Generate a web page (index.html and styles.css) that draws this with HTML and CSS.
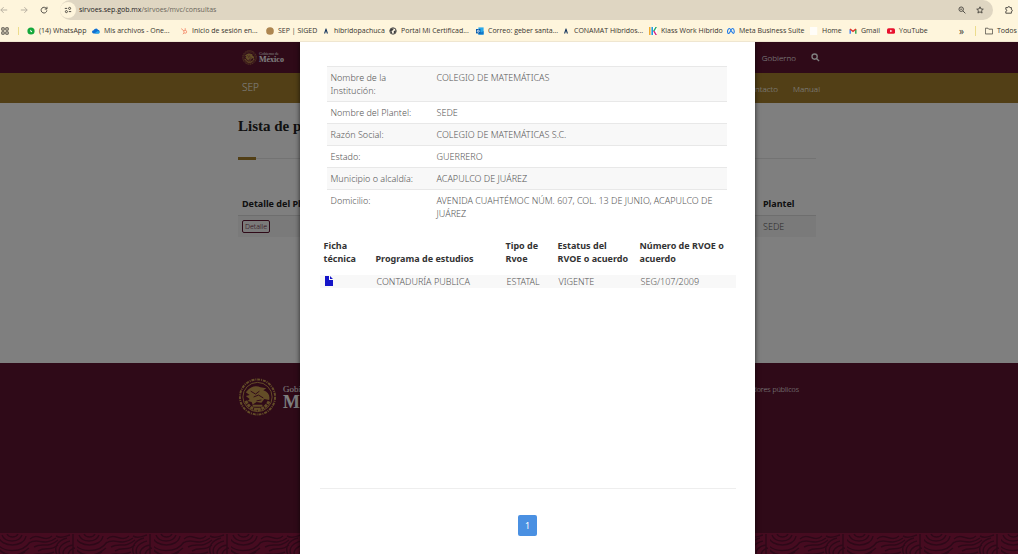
FILE: index.html
```html
<!DOCTYPE html>
<html lang="es">

<head>
    <meta charset="UTF-8">
    <meta name="viewport" content="width=device-width, initial-scale=1.0">
    <title>Consultas SIRVOES</title>
    <link rel="stylesheet" href="styles.css">
</head>

<body>
    <!-- Browser bar -->
    <header class="browser">
        <div class="toolbar">
            <button class="tool" aria-label="Atrás"><svg viewBox="0 0 10 10" class="faded"><path d="M9 5H1M4.500 1.500L1 5l3.500 3.500" /></svg></button>
            <button class="tool" aria-label="Adelante"><svg viewBox="0 0 10 10" class="faded"><path d="M1 5h8M5.500 1.500L9 5 5.500 8.500" /></svg></button>
            <button class="tool" aria-label="Recargar"><svg viewBox="0 0 10 10"><path d="M8.200 3.500A3.600 3.600 0 1 0 8.600 5.500M8.700 1v2.800H5.900" /></svg></button>
            <div class="address">
                <button class="site-info" aria-label="Información del sitio"><svg viewBox="0 0 10 10"><path d="M1 3h3M9 7H6" /><circle cx="7" cy="3" r="1.300" /><circle cx="3" cy="7" r="1.300" /></svg></button>
                <span class="url"><b>sirvoes.sep.gob.mx</b>/sirvoes/mvc/consultas</span>
                <button class="tool" aria-label="Zoom"><svg viewBox="0 0 10 10"><circle cx="4" cy="4" r="2.800" /><path d="M6 6l3.200 3.200M2.800 4h2.400" /></svg></button>
                <button class="tool" aria-label="Favorito"><svg viewBox="0 0 10 10"><path d="M5 1l1.200 2.700 2.900.3-2.200 1.900.7 2.900L5 7.300 2.400 8.800l.7-2.900L.9 4l2.900-.3z" /></svg></button>
            </div>
            <button class="tool" aria-label="Extensiones"><svg viewBox="0 0 10 10"><path d="M1 2h2.500a1.300 1.300 0 0 1 2.600 0H8v2.500a1.200 1.200 0 0 1 0 2.400V9H1V6.700a1.200 1.200 0 0 0 0-2.400z" /></svg></button>
        </div>
        <nav class="bookmarks">
            <button class="apps" aria-label="Aplicaciones"><svg viewBox="0 0 10 10"><path d="M1 1h3v3H1zM6 1h3v3H6zM1 6h3v3H1zM6 6h3v3H6z" /></svg></button>
            <a href="#"><svg viewBox="0 0 10 10"><circle cx="5" cy="5" r="4.500" fill="#14a83c" /><path d="M4 3.200c-.6 2 .8 3.500 2.300 3.500V5.400L4.600 4z" fill="#fff" /></svg>(14) WhatsApp</a>
            <a href="#"><svg viewBox="0 0 10 10"><path d="M2 8a2 2 0 0 1 0-4 3 3 0 0 1 5.400-.5A2.300 2.300 0 0 1 8 8z" fill="#0f6fd1" /><path d="M3 8l4-3a2 2 0 0 1 2 3z" fill="#28a8ea" /></svg>Mis archivos - One...</a>
            <a href="#"><svg viewBox="0 0 10 10"><g fill="none" stroke="#f3805f"><circle cx="6.500" cy="6" r="1.800" /><path d="M5 5L1.500 2M6.500 4V1.500M5 7.500L3.500 9" /></g></svg>Inicio de sesión en...</a>
            <a href="#"><svg viewBox="0 0 10 10"><circle cx="5" cy="5" r="4.800" fill="#ad8650" /></svg>SEP | SIGED</a>
            <a href="#"><svg viewBox="0 0 10 10"><path d="M2.500 8L4.500 2h1l2 6H6l-1-3-1 3z" fill="#17375f" /></svg>hibridopachuca</a>
            <a href="#"><svg viewBox="0 0 10 10"><circle cx="5" cy="5" r="4" fill="#fff8e6" stroke="#3d3d3d" stroke-width="1.200" /><path d="M1 4l2-2 3 0-1 2-2 1 1 2-1 1zM6 5l3-1-1 3-2 1.500z" fill="#3d3d3d" /></svg>Portal Mi Certificad...</a>
            <a href="#"><svg viewBox="0 0 10 10"><path d="M3 .5h6.500v9H3z" fill="#28a8ea" /><path d="M3 5l3.300 2L9.500 5v4.500H3z" fill="#1378c9" /><path d="M0 2.500h5.500V8H0z" fill="#075aa9" /><circle cx="2.800" cy="5.200" r="1.300" fill="none" stroke="#fff" /></svg>Correo: geber santa...</a>
            <a href="#"><svg viewBox="0 0 10 10"><path d="M2.500 8L4.500 2h1l2 6H6l-1-3-1 3z" fill="#17375f" /></svg>CONAMAT Híbridos...</a>
            <a href="#"><svg viewBox="0 0 10 10"><path d="M0 0h10v10H0z" fill="#fff" /><path d="M0 0h2v10H0z" fill="#f1ab30" /><path d="M3 0h2v10H3z" fill="#219bdc" /><path d="M5 5l3-5h2L7 5z" fill="#2daa63" /><path d="M5 5h2l3 5H8z" fill="#d9277c" /></svg>Klass Work Híbrido</a>
            <a href="#"><svg viewBox="0 0 10 10"><path d="M1 7.500C0 5 1.500 2 3 2c2 0 3 6 5 6 1.500 0 1.500-6-1-6S4 8 2 8C1.500 8 1 8 1 7.500z" fill="none" stroke="#1877e8" stroke-width="1.300" /></svg>Meta Business Suite</a>
            <a href="#"><svg viewBox="0 0 10 10"><path d="M0 0h9v10H0z" fill="#fffdf8" /></svg>Home</a>
            <a href="#"><svg viewBox="0 0 10 10"><path d="M1.500 8.500V3" stroke="#4285f4" stroke-width="1.800" /><path d="M8.500 8.500V3" stroke="#34a853" stroke-width="1.800" /><path d="M1.200 2.500L5 5.500l3.800-3" fill="none" stroke="#e0352b" stroke-width="1.800" /></svg>Gmail</a>
            <a href="#"><svg viewBox="0 0 10 10"><rect y="1.500" width="10" height="7" rx="2" fill="#e8112d" /><path d="M4 3.500L6.800 5 4 6.500z" fill="#fff" /></svg>YouTube</a>
            <button class="more" aria-label="Más marcadores">»</button>
            <a href="#" class="all"><svg viewBox="0 0 10 10"><path d="M.5 1.500h3.200l1 1.200h4.800v6h-9z" fill="none" stroke="#4d4a43" /></svg>Todos</a>
        </nav>
    </header>

    <svg class="defs" aria-hidden="true">
        <symbol id="seal" viewBox="0 0 40 40">
            <g fill="none" stroke="currentColor">
                <circle cx="20" cy="20" r="18" stroke-width="2" stroke-dasharray="3 1 1 1" />
                <circle cx="20" cy="20" r="15" />
                <path d="M8 24c3 7 9 9 12 9s9-2 12-9" stroke-width="3" stroke-dasharray="3 1" />
                <path d="M15 29h10M17 32h6" stroke-width="2" />
            </g>
            <path d="M9 14c4-5 10-6 14-4l6 1-3 2c5 2 7 5 6 10l-5-1-3 4-5-1-4 3-1-3-4-1 2-2-4-3 4-1-4-3z" fill="currentColor" />
            <path d="M13 14l5 3 4-3M16 20l5-2 5 3M19 24l5-1" fill="none" stroke="#611232" />
        </symbol>
    </svg>

    <main class="viewport">
        <div class="page">
            <div class="top-bar">
                <div class="container bar-row">
                    <a href="#" class="brand">
                        <svg><use href="#seal" /></svg>
                        <span class="brand-name"><small>Gobierno de</small>México</span>
                    </a>
                    <nav class="links">
                        <a href="#">Gobierno</a>
                        <button class="search" aria-label="Buscar"><svg viewBox="0 0 10 10"><circle cx="4" cy="4" r="2.900" /><path d="M6 6l3 3" /></svg></button>
                    </nav>
                </div>
            </div>
            <div class="sub-bar">
                <div class="container bar-row">
                    <a href="#" class="sep">SEP</a>
                    <nav class="links">
                        <a href="#">Contacto</a>
                        <a href="#">Manual</a>
                    </nav>
                </div>
            </div>
            <section class="container results">
                <h1>Lista de planteles</h1>
                <table class="plantels">
                    <thead>
                        <tr>
                            <th>Detalle del Plantel</th>
                            <th>Plantel</th>
                        </tr>
                    </thead>
                    <tbody>
                        <tr>
                            <td><button class="detail">Detalle</button></td>
                            <td>SEDE</td>
                        </tr>
                    </tbody>
                </table>
            </section>
            <footer>
                <div class="container footer-row">
                    <div class="brand brand-large">
                        <svg><use href="#seal" /></svg>
                        <span class="brand-name"><small>Gobierno de</small>México</span>
                    </div>
                    <a href="#">Denuncia contra servidores públicos</a>
                </div>
                <svg class="greca" aria-hidden="true">
                    <defs>
                        <pattern id="waves" width="77" height="28" patternUnits="userSpaceOnUse">
                            <g fill="none" stroke="#5c1030" stroke-width="1.500">
                                <path d="M-2 3c3 12 26 12 28 0M2 2c3 8 17 8 20 0M7 1c2 4 9 4 11 0M-4 8c4 12 26 13 34 1M-3 14c8 11 22 10 32 1M3 21c8 4 16 2 22-2" />
                                <path d="M30 6c8-7 14 4 22-3M29 10c9-6 15 4 27-5M34 14c8-5 14 2 24-7M38 18c8-5 12 1 20-6M28 24c8-6 16 0 26-5" />
                                <path d="M57 22c-4-9 2-15 10-17M60 22c-3-7 2-12 10-14M64 23c-3-5 2-10 9-11M68 23c0-5 3-7 7-8M56 3c5 3 10 0 14-1M73 1v22" />
                            </g>
                        </pattern>
                    </defs>
                    <rect width="100%" height="28" fill="#8c1741" />
                    <rect width="100%" height="28" fill="url(#waves)" />
                </svg>
            </footer>
        </div>

        <div class="backdrop">
            <div class="modal" role="dialog" aria-modal="true" aria-label="Detalle del plantel">
                <table class="info">
                    <tbody>
                        <tr><th scope="row">Nombre de la Institución:</th><td>COLEGIO DE MATEMÁTICAS</td></tr>
                        <tr><th scope="row">Nombre del Plantel:</th><td>SEDE</td></tr>
                        <tr><th scope="row">Razón Social:</th><td>COLEGIO DE MATEMÁTICAS S.C.</td></tr>
                        <tr><th scope="row">Estado:</th><td>GUERRERO</td></tr>
                        <tr><th scope="row">Municipio o alcaldía:</th><td>ACAPULCO DE JUÁREZ</td></tr>
                        <tr><th scope="row">Domicilio:</th><td>AVENIDA CUAHTÉMOC NÚM. 607, COL. 13 DE JUNIO, ACAPULCO DE JUÁREZ</td></tr>
                    </tbody>
                </table>

                <table class="programs">
                    <colgroup>
                        <col class="col-file">
                        <col class="col-program">
                        <col class="col-type">
                        <col class="col-status">
                        <col>
                    </colgroup>
                    <thead>
                        <tr>
                            <th>Ficha técnica</th>
                            <th>Programa de estudios</th>
                            <th>Tipo de Rvoe</th>
                            <th>Estatus del RVOE o acuerdo</th>
                            <th>Número de RVOE o acuerdo</th>
                        </tr>
                    </thead>
                    <tbody>
                        <tr>
                            <td><a href="#" aria-label="Ficha técnica"><svg viewBox="0 0 8 10"><path d="M0 0h4v4h4v6H0zM5 0l3 3H5z" /></svg></a></td>
                            <td>CONTADURÍA PUBLICA</td>
                            <td>ESTATAL</td>
                            <td>VIGENTE</td>
                            <td>SEG/107/2009</td>
                        </tr>
                    </tbody>
                </table>

                <div class="pager">
                    <button>1</button>
                </div>
            </div>
        </div>
    </main>
</body>

</html>
```
FILE: styles.css
```css
:root {
    --wine: #5e1431;
    --gold: #a57f2c;
    --chrome: #fef5dc;
    --address: #dfd6c2;
    --text: #555;
    --line: #e8e8e8;
    --stripe: #f8f8f8;
}

* {
    margin: 0;
    padding: 0;
    box-sizing: border-box;
}

body {
    height: 100vh;
    display: flex;
    flex-direction: column;
    overflow: hidden;
    font-family: 'Noto Sans', sans-serif;
    font-size: 9px;
    line-height: 13px;
    color: var(--text);
}

a {
    color: inherit;
    text-decoration: none;
}

button {
    font: inherit;
    color: inherit;
    background: none;
    border: none;
    cursor: pointer;
}

svg {
    display: block;
    flex: none;
}

table {
    border-collapse: collapse;
    table-layout: fixed;
}

th,
td {
    text-align: left;
    vertical-align: top;
}

.defs {
    position: absolute;
    width: 0;
    height: 0;
}

/* Browser bar */
.browser {
    background: var(--chrome);
    border-bottom: 1px solid #efe6d0;
    font-family: 'Open Sans', sans-serif;
    font-size: 7px;
    line-height: 10px;
    color: #37342e;
}

.toolbar {
    display: flex;
    align-items: center;
    gap: 12px;
    height: 20px;
    padding-right: 5px;
}

.tool svg,
.site-info svg,
.apps svg {
    width: 8px;
    height: 8px;
    fill: none;
    stroke: #4d4a43;
    stroke-width: 1.2;
}

.tool .faded {
    stroke: #b5ae9f;
}

.address {
    flex: 1;
    display: flex;
    align-items: center;
    gap: 10px;
    height: 20px;
    padding-right: 9px;
    border-radius: 10px;
    background: var(--address);
}

.site-info {
    padding: 4px;
    border-radius: 8px;
    background: var(--chrome);
}

.url {
    flex: 1;
    margin-left: -7px;
    color: #6b665b;
}

.url b {
    font-weight: 400;
    color: #24221e;
}

.bookmarks {
    display: grid;
    grid-template-columns: 27px 65px 88px 86px 56px 67px 87px 86px 87px 78px 83px 39px 38px 72px 16px 1fr;
    align-items: center;
    height: 21px;
    white-space: nowrap;
}

.bookmarks a {
    display: flex;
    align-items: center;
    gap: 4px;
}

.bookmarks a svg {
    width: 8px;
    height: 8px;
}

.apps {
    width: 19px;
    padding-left: 1px;
    border-right: 1px solid #ecdc8b;
}

.more {
    font-size: 10px;
    text-align: left;
}

.bookmarks .all {
    padding-left: 9px;
    border-left: 1px solid #ecdc8b;
}

/* Page behind the modal */
.viewport {
    position: relative;
    flex: 1;
    overflow: hidden;
}

.page {
    display: flex;
    flex-direction: column;
    width: calc(100% + 36px);
    height: 100%;
    background: white;
}

.container {
    width: 578px;
    max-width: 100%;
    margin: 0 auto;
}

.top-bar {
    background: var(--wine);
    color: white;
}

.sub-bar {
    background: var(--gold);
    color: white;
}

.bar-row {
    display: flex;
    justify-content: space-between;
    align-items: center;
    width: 586px;
    height: 31px;
    padding-left: 8px;
}

.sub-bar .bar-row {
    height: 30px;
    padding-bottom: 2px;
}

.links {
    display: flex;
    align-items: center;
    gap: 15px;
    font-size: 8px;
    font-weight: 300;
}

.sub-bar .links {
    padding-top: 3px;
}

.search svg {
    width: 9px;
    height: 9px;
    fill: none;
    stroke: white;
    stroke-width: 1.5;
}

.sep {
    font-weight: 300;
    font-size: 10px;
}

.brand {
    display: flex;
    align-items: center;
    gap: 2px;
}

.brand svg {
    width: 15px;
    height: 15px;
    color: #c79a4e;
}

.brand-name {
    font-family: 'Liberation Serif', serif;
    font-size: 8px;
    font-weight: 700;
    line-height: 8px;
}

.brand-name small {
    display: block;
    font-size: 4px;
    font-weight: 400;
    line-height: 4px;
}

.results {
    flex: 1;
}

h1 {
    position: relative;
    margin-bottom: 35px;
    padding: 13px 0 22px;
    border-bottom: 1px solid #e6e6e6;
    font-family: 'Liberation Serif', serif;
    font-size: 15px;
    line-height: 20px;
    color: #222;
}

h1::after {
    content: '';
    position: absolute;
    left: 0;
    bottom: -2px;
    width: 18px;
    height: 3px;
    background: var(--gold);
}

.plantels {
    width: 100%;
}

.plantels th {
    padding: 3px 4px 5px;
    border-bottom: 1px solid #ddd;
    color: #222;
}

.plantels th:last-child {
    width: 57px;
}

.plantels td {
    padding: 4px;
    background: #f5f5f5;
    font-weight: 300;
}

.detail {
    display: block;
    padding: 0 2px;
    border: 1px solid var(--wine);
    border-radius: 2px;
    font-size: 7px;
    line-height: 11px;
    color: var(--wine);
}

footer {
    background: var(--wine);
    color: white;
}

.footer-row {
    display: flex;
    justify-content: space-between;
    padding: 14px 17px 0 0;
    height: 170px;
    font-size: 7px;
    line-height: 26px;
    font-weight: 300;
}

.brand-large {
    align-self: flex-start;
    gap: 6px;
}

.brand-large svg {
    width: 39px;
    height: 40px;
}

.brand-large .brand-name {
    font-size: 18px;
    line-height: 16px;
}

.brand-large small {
    font-size: 9px;
    line-height: 9px;
}

.greca {
    width: 100%;
    height: 21px;
}

/* Modal */
.backdrop {
    position: absolute;
    inset: 0 -36px 0 0;
    display: flex;
    justify-content: center;
    background: rgba(0, 0, 0, 0.5);
}

.modal {
    display: flex;
    flex-direction: column;
    width: 455px;
    padding: 24px 19px 18px 20px;
    background: white;
    box-shadow: 0 0 5px rgba(0, 0, 0, 0.7);
}

.info {
    margin: 0 9px 15px 7px;
}

.info th,
.info td {
    padding: 4px;
    border-top: 1px solid var(--line);
    font-weight: 300;
}

.info th {
    width: 106px;
}

.info tr:nth-child(odd) {
    background: var(--stripe);
}

.programs {
    width: 100%;
}

.programs th {
    padding: 0 4px 10px;
    vertical-align: bottom;
    font-weight: 700;
    color: #333;
}

.programs td {
    padding: 0 5px;
    background: var(--stripe);
    font-weight: 300;
}

.programs td svg {
    width: 8px;
    height: 10px;
    margin-top: 1px;
    fill: #1414c8;
}

.col-file {
    width: 52px;
}

.col-program {
    width: 130px;
}

.col-type {
    width: 52px;
}

.col-status {
    width: 82px;
}

.pager {
    margin-top: auto;
    padding-top: 26px;
    border-top: 1px solid #eee;
    text-align: center;
}

.pager button {
    width: 19px;
    height: 21px;
    border-radius: 2px;
    background: #4a90e2;
    color: white;
}
```
